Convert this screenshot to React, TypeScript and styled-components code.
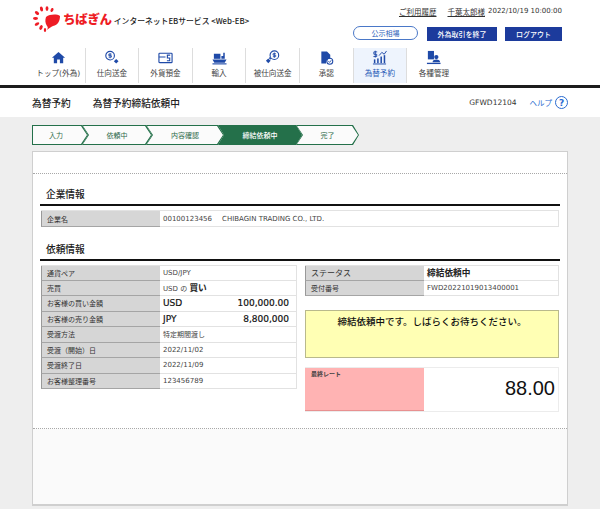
import React from "react"
import styled, { createGlobalStyle } from "styled-components"

const SANS = `"DejaVu Sans", "Noto Sans CJK JP", sans-serif`
const BLUE = "#1f4aa8"
const NAVY = "#1c3b9c"
const GREEN = "#24704a"

const GlobalStyle = createGlobalStyle`
  html, body {
    margin: 0;
    padding: 0;
    background: #eeeeee;
    font-family: ${SANS};
    color: #333;
  }
  * { box-sizing: border-box; }
`

const Page = styled.div`
  width: 600px;
  height: 509px;
  overflow: hidden;
  background: #eeeeee;
`

const Header = styled.header`
  height: 88px;
  background: #fff;
  border-bottom: 3px solid #1c1c1c;
`

const HeaderTop = styled.div`
  height: 48px;
  display: flex;
  justify-content: space-between;
  padding: 5px 38px 0 33px;
`

const Brand = styled.div`
  display: flex;
  align-items: center;
  height: 27px;
`

const BrandName = styled.span`
  font-family: "Noto Sans CJK JP", sans-serif;
  font-size: 12.5px;
  font-weight: 900;
  color: #ee1c25;
  margin: 0 2px 0 2px;
  letter-spacing: -0.3px;
`

const BrandSub = styled.span`
  font-size: 7.8px;
  font-weight: 500;
  color: #222;
  font-family: "Noto Sans CJK JP", sans-serif;
  margin-top: 3px;
`

const HeaderRight = styled.div`
  display: flex;
  flex-direction: column;
  align-items: flex-end;
`

const UserLine = styled.div`
  display: flex;
  align-items: center;
  height: 14px;
  font-size: 7px;
  margin-top: -1px;
`

const UserLink = styled.a`
  font-size: 7.5px;
  text-decoration: underline;
  color: #333;
  margin-right: ${(p: { $gap: number }) => p.$gap}px;
`

const Buttons = styled.div`
  display: flex;
  gap: 8px;
  margin-top: 9px;
`

const Pill = styled.div`
  width: 65px;
  height: 14px;
  margin-right: 1px;
  margin-top: -1px;
  border: 1px solid #4a78c8;
  border-radius: 7px;
  display: flex;
  align-items: center;
  justify-content: center;
  font-size: 7px;
  color: #2a5cb8;
`

const NavyButton = styled.div<{ $w: number }>`
  width: ${(p) => p.$w}px;
  height: 14px;
  background: ${NAVY};
  color: #fff;
  display: flex;
  align-items: center;
  justify-content: center;
  font-size: 7px;
  font-weight: 500;
`

const Nav = styled.nav`
  display: flex;
  height: 35px;
  padding-left: 32px;
`

const NavItem = styled.div<{ $active?: boolean; $last?: boolean }>`
  width: 53.6px;
  display: flex;
  flex-direction: column;
  align-items: center;
  font-size: 7.6px;
  padding-top: 2px;
  color: ${(p) => (p.$active ? "#2a5cb8" : "#444")};
  background: ${(p) => (p.$active ? "#eef4fd" : "transparent")};
  border-right: ${(p) => (p.$last ? "none" : "1px solid #dddddd")};
`

const NavIcon = styled.svg`
  width: 15px;
  height: 15px;
  margin-bottom: 2px;
  fill: ${BLUE};
`

const TitleBar = styled.div`
  height: 29px;
  background: #fff;
  display: flex;
  align-items: center;
  padding: 0 32px;
`

const Title = styled.div`
  font-size: 9.7px;
  font-weight: 500;
  color: #222;
  margin-right: 22px;
`

const ScreenId = styled.div`
  margin-left: auto;
  font-size: 7.5px;
  color: #333;
`

const Help = styled.div`
  margin-left: 13px;
  font-size: 7.5px;
  color: #2a6bd0;
  display: flex;
  align-items: center;
  gap: 3px;
`

const HelpMark = styled.span`
  width: 13px;
  height: 13px;
  border: 1.5px solid #2a6bd0;
  border-radius: 50%;
  display: flex;
  align-items: center;
  justify-content: center;
  font-size: 9px;
  font-weight: 700;
`

const Steps = styled.ol`
  display: flex;
  list-style: none;
  margin: 8px 0 0 32px;
  padding: 0;
  height: 20px;
`

const Step = styled.li<{ $w: number; $first?: boolean }>`
  width: ${(p) => p.$w}px;
  height: 20px;
  margin-left: ${(p) => (p.$first ? 0 : -6)}px;
  padding: 1px;
  background: ${GREEN};
  clip-path: polygon(
    0 0,
    calc(100% - 6px) 0,
    100% 50%,
    calc(100% - 6px) 100%,
    0 100%,
    ${(p) => (p.$first ? "0 100%" : "6px 50%")}
  );
`

const StepFill = styled.div<{ $active?: boolean; $first?: boolean }>`
  width: 100%;
  height: 100%;
  display: flex;
  align-items: center;
  justify-content: center;
  padding-right: ${(p) => (p.$first ? 8 : 0)}px;
  font-size: 7px;
  font-weight: ${(p) => (p.$active ? 500 : 400)};
  color: ${(p) => (p.$active ? "#fff" : "#2e6a4a")};
  background: ${(p) => (p.$active ? GREEN : "#fbfbfb")};
  clip-path: polygon(
    0 0,
    calc(100% - 6px) 0,
    100% 50%,
    calc(100% - 6px) 100%,
    0 100%,
    ${(p) => (p.$first ? "0 100%" : "6px 50%")}
  );
`

const Card = styled.main`
  width: 536px;
  height: 355px;
  margin: 6px 0 0 32px;
  background: #fff;
  border: 1px solid #cfcfcf;
  border-width: 1px 1.5px 2px 1.5px;
  display: flex;
  flex-direction: column;
`

const CardTop = styled.div`
  height: 22px;
  flex: none;
  border-bottom: 1px dotted #a8a8a8;
`

const CardBody = styled.div`
  height: 255px;
  flex: none;
  padding: 0 7px;
  border-bottom: 1px dotted #a8a8a8;
`

const CardFoot = styled.div`
  flex: 1;
  background: #fafafa;
`

const Heading = styled.h2<{ $top: number }>`
  margin: ${(p) => p.$top}px 0 0;
  height: 20px;
  padding: 0 0 3px 6px;
  font-size: 9.7px;
  font-weight: 500;
  color: #222;
  border-bottom: 2px solid #111;
  display: flex;
  align-items: center;
`

const TableWrap = styled.div`
  margin: 4px 1px 0;
`

const Columns = styled.div`
  display: grid;
  grid-template-columns: 256px 254px;
  column-gap: 8px;
  margin: 4px 0 0 1px;
`

const Row = styled.div<{ $h?: number; $first?: boolean }>`
  display: grid;
  grid-template-columns: 119px 1fr;
  height: ${(p) => p.$h ?? 15.5}px;
  border-top: ${(p) => (p.$first ? "1px solid #e2e2e2" : "none")};
`

const Label = styled.div`
  background: #d6d6d6;
  border-left: 1px solid #999;
  border-bottom: 1px solid #a5a5a5;
  display: flex;
  align-items: center;
  padding-left: 5px;
  font-size: ${(p: { $size?: number }) => p.$size ?? 7}px;
  color: #333;
`

const Value = styled.div`
  background: #fff;
  border-right: 1px solid #e2e2e2;
  border-bottom: 1px solid #e2e2e2;
  display: flex;
  align-items: center;
  padding: 0 7px 0 3px;
  font-size: 7px;
  color: #444;
  white-space: pre;
`

const Strong = styled.span`
  font-family: "Noto Sans CJK JP", sans-serif;
  font-size: 8.7px;
  font-weight: 700;
  color: #222;
`

const CompanyCode = styled.span`
  margin-right: 10px;
`

const Amount = styled(Value)`
  justify-content: space-between;
  font-size: 9px;
  color: #111;
  -webkit-text-stroke: 0.2px #111;
`

const RightColumn = styled.div`
  display: flex;
  flex-direction: column;
`

const Notice = styled.div`
  height: 48px;
  margin-top: 14px;
  padding-top: 3px;
  background: #ffffb4;
  border: 1px solid #b9b98c;
  border-width: 1px 1px 1px 0.5px;
  text-align: center;
  font-size: 9.5px;
  font-weight: 500;
  color: #111;
  font-family: "Noto Sans CJK JP", sans-serif;
`

const RateBox = styled.div`
  display: grid;
  grid-template-columns: 119px 1fr;
  height: 45px;
  margin-top: 9px;
  border: 1px solid #ececec;
  border-left: none;
`

const RateLabel = styled.div`
  background: #ffb3b3;
  border: 1px solid #e89090;
  border-width: 0 0 1px 0;
  padding: 1px 0 0 6px;
  font-size: 6px;
  font-weight: 700;
  color: #444;
`

const RateValue = styled.div`
  display: flex;
  align-items: center;
  justify-content: flex-end;
  padding-right: 3px;
  padding-bottom: 2px;
  font-family: "Liberation Sans", sans-serif;
  font-size: 20px;
  color: #111;
`

const Logo = () => (
  <svg width="28" height="26" viewBox="0 0 28 26" fill="#ee1c25">
    <path d="M13 11 C17 8 24 8 27 10 C27 15 25 19 20 20 C18 21 16 22 14 24 C15 22 15 21 14 20 C12 17 12 14 13 11Z" />
    <ellipse cx="8.5" cy="3" rx="1.5" ry="2.5" transform="rotate(-15 8.5 3)" />
    <ellipse cx="14" cy="2.6" rx="1.4" ry="2.3" />
    <ellipse cx="19" cy="4" rx="1.4" ry="2.1" transform="rotate(25 19 4)" />
    <ellipse cx="4" cy="7" rx="1.5" ry="2.5" transform="rotate(-50 4 7)" />
    <ellipse cx="2.5" cy="12.5" rx="2.5" ry="1.4" />
    <ellipse cx="4" cy="18" rx="2.5" ry="1.4" transform="rotate(-30 4 18)" />
    <ellipse cx="8" cy="21.5" rx="1.5" ry="2.5" transform="rotate(25 8 21.5)" />
    <ellipse cx="12" cy="24" rx="1.2" ry="1.9" />
  </svg>
)

const Coin = ({ cx, cy }: { cx: number; cy: number }) => (
  <g>
    <circle cx={cx} cy={cy} r="4.6" fill="none" stroke={BLUE} strokeWidth="1.2" />
    <path
      d={`M${cx + 1.6} ${cy - 1.6} H${cx - 1.4} V${cy} H${cx + 1.4} V${cy + 1.6} H${cx - 1.6} M${cx} ${cy - 2.8} V${cy + 2.8}`}
      fill="none"
      stroke={BLUE}
      strokeWidth="0.9"
    />
  </g>
)

const icons = [
  <path key="home" d="M8 2 L1 8.2 H3 V14 H6.5 V10 H9.5 V14 H13 V8.2 H15Z" />,
  <g key="send">
    <Coin cx={6.5} cy={6} />
    <path d="M13 9.5 L15.5 12 L13 14.5 L10.5 12Z" />
  </g>,
  <g key="deposit" fill="none" stroke={BLUE} strokeWidth="1.2">
    <rect x="1" y="3.5" width="14" height="10" rx="0.8" />
    <path d="M1 7.5 H8 M13 5.5 H10 V8.5 H12.5 V11.5 H9.5" />
  </g>,
  <g key="ship">
    <path d="M0.5 10 H15.5 L13.5 13.5 H2.5Z" />
    <rect x="2" y="4" width="7" height="5.4" />
    <path d="M10 9.4 V6.5 H12 V3 H13.6 V9.4Z" />
    <rect x="0.5" y="14.2" width="15" height="1.2" />
  </g>,
  <g key="receive">
    <Coin cx={10} cy={5.5} />
    <path d="M3.5 9 L6 11.5 L3.5 14 L1 11.5Z" />
    <path d="M5 7.5 L7 9.5 L5.5 10.2 L4.2 8.8Z" />
  </g>,
  <g key="approve">
    <path d="M2.5 1.5 H8.5 L12 5 V9 A4.5 4.5 0 0 0 7.5 14.5 H2.5Z" />
    <circle cx="11.5" cy="12" r="3.2" fill="none" stroke={BLUE} strokeWidth="1.1" />
    <path d="M10 12 L11.2 13.2 L13 11" fill="none" stroke={BLUE} strokeWidth="1" />
  </g>,
  <g key="forward">
    <path d="M5.5 2 H2 V4.5 H5 V7 H1.5 M3.5 0.8 V8" fill="none" stroke={BLUE} strokeWidth="1" />
    <path d="M7.5 6 L10.5 2.5 L13 4.5 L15.5 1" fill="none" stroke={BLUE} strokeWidth="1" />
    <rect x="2" y="10" width="1.6" height="4" />
    <rect x="5.5" y="9" width="1.6" height="5" />
    <rect x="9" y="7" width="1.6" height="7" />
    <rect x="12.5" y="5.5" width="1.6" height="8.5" />
    <rect x="1" y="14.4" width="14" height="1" />
  </g>,
  <g key="admin">
    <rect x="2" y="1" width="6.5" height="9" />
    <circle cx="11" cy="7.5" r="2.3" />
    <path d="M7 13 A4 3 0 0 1 15 13Z" />
    <rect x="1" y="13.6" width="14.5" height="1.4" />
  </g>,
]

const navLabels = ["トップ(外為)", "仕向送金", "外貨預金", "輸入", "被仕向送金", "承認", "為替予約", "各種管理"]

const steps = [
  { label: "入力", w: 56 },
  { label: "依頼中", w: 70 },
  { label: "内容確認", w: 78 },
  { label: "締結依頼中", w: 84, active: true },
  { label: "完了", w: 63 },
]

const requestRows = [
  { label: "受渡方法", value: "特定期間渡し" },
  { label: "受渡（開始）日", value: "2022/11/02" },
  { label: "受渡終了日", value: "2022/11/09" },
  { label: "お客様整理番号", value: "123456789" },
]

const App = () => {
  return (
    <Page>
      <GlobalStyle />
      <Header>
        <HeaderTop>
          <Brand>
            <Logo />
            <BrandName>ちばぎん</BrandName>
            <BrandSub>インターネットEBサービス &lt;Web-EB&gt;</BrandSub>
          </Brand>
          <HeaderRight>
            <UserLine>
              <UserLink $gap={11}>ご利用履歴</UserLink>
              <UserLink $gap={3}>千葉太郎様</UserLink>
              2022/10/19 10:00:00
            </UserLine>
            <Buttons>
              <Pill>公示相場</Pill>
              <NavyButton $w={70}>外為取引を終了</NavyButton>
              <NavyButton $w={57}>ログアウト</NavyButton>
            </Buttons>
          </HeaderRight>
        </HeaderTop>
        <Nav>
          {navLabels.map((label, i) => (
            <NavItem key={label} $active={i === 6} $last={i === 7}>
              <NavIcon viewBox="0 0 16 16">{icons[i]}</NavIcon>
              {label}
            </NavItem>
          ))}
        </Nav>
      </Header>
      <TitleBar>
        <Title>為替予約</Title>
        <Title>為替予約締結依頼中</Title>
        <ScreenId>GFWD12104</ScreenId>
        <Help>
          ヘルプ
          <HelpMark>?</HelpMark>
        </Help>
      </TitleBar>
      <Steps>
        {steps.map((s, i) => (
          <Step key={s.label} $w={s.w} $first={i === 0}>
            <StepFill $active={s.active} $first={i === 0}>
              {s.label}
            </StepFill>
          </Step>
        ))}
      </Steps>
      <Card>
        <CardTop />
        <CardBody>
          <Heading $top={12}>企業情報</Heading>
          <TableWrap>
            <Row $h={17} $first>
              <Label>企業名</Label>
              <Value>
                <CompanyCode>00100123456</CompanyCode>
                CHIBAGIN TRADING CO., LTD.
              </Value>
            </Row>
          </TableWrap>
          <Heading $top={14}>依頼情報</Heading>
          <Columns>
            <div>
              <Row $first>
                <Label>通貨ペア</Label>
                <Value>USD/JPY</Value>
              </Row>
              <Row>
                <Label>売買</Label>
                <Value>
                  USD の <Strong>買い</Strong>
                </Value>
              </Row>
              <Row>
                <Label>お客様の買い金額</Label>
                <Amount>
                  <span>USD</span>
                  <span>100,000.00</span>
                </Amount>
              </Row>
              <Row>
                <Label>お客様の売り金額</Label>
                <Amount>
                  <span>JPY</span>
                  <span>8,800,000</span>
                </Amount>
              </Row>
              {requestRows.map((r) => (
                <Row key={r.label}>
                  <Label>{r.label}</Label>
                  <Value>{r.value}</Value>
                </Row>
              ))}
            </div>
            <RightColumn>
              <Row $first>
                <Label $size={8}>ステータス</Label>
                <Value>
                  <Strong>締結依頼中</Strong>
                </Value>
              </Row>
              <Row>
                <Label>受付番号</Label>
                <Value>FWD20221019013400001</Value>
              </Row>
              <Notice>締結依頼中です。しばらくお待ちください。</Notice>
              <RateBox>
                <RateLabel>最終レート</RateLabel>
                <RateValue>88.00</RateValue>
              </RateBox>
            </RightColumn>
          </Columns>
        </CardBody>
        <CardFoot />
      </Card>
    </Page>
  )
}

export default App
